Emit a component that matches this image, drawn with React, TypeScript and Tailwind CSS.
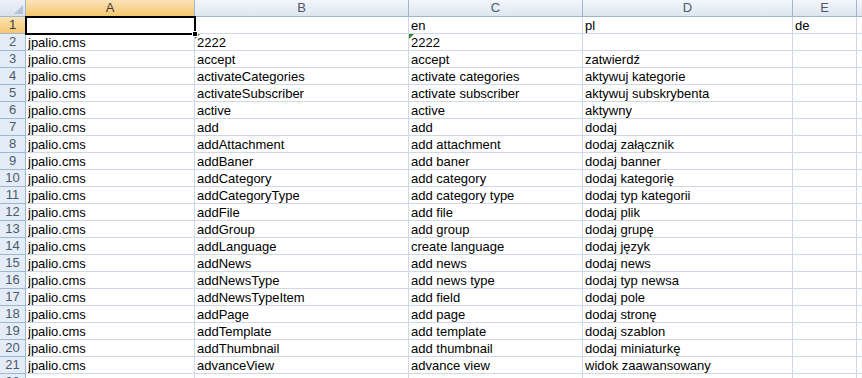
import React from 'react';

const COLS = [
  { key: 'A', w: 169 },
  { key: 'B', w: 214 },
  { key: 'C', w: 174 },
  { key: 'D', w: 210 },
  { key: 'E', w: 64 },
  { key: 'F', w: 60 },
];

const rows: string[][] = [
  ['', '', 'en', 'pl', 'de'],
  ['jpalio.cms', '2222', '2222', '', ''],
  ['jpalio.cms', 'accept', 'accept', 'zatwierdź', ''],
  ['jpalio.cms', 'activateCategories', 'activate categories', 'aktywuj kategorie', ''],
  ['jpalio.cms', 'activateSubscriber', 'activate subscriber', 'aktywuj subskrybenta', ''],
  ['jpalio.cms', 'active', 'active', 'aktywny', ''],
  ['jpalio.cms', 'add', 'add', 'dodaj', ''],
  ['jpalio.cms', 'addAttachment', 'add attachment', 'dodaj załącznik', ''],
  ['jpalio.cms', 'addBaner', 'add baner', 'dodaj banner', ''],
  ['jpalio.cms', 'addCategory', 'add category', 'dodaj kategorię', ''],
  ['jpalio.cms', 'addCategoryType', 'add category type', 'dodaj typ kategorii', ''],
  ['jpalio.cms', 'addFile', 'add file', 'dodaj plik', ''],
  ['jpalio.cms', 'addGroup', 'add group', 'dodaj grupę', ''],
  ['jpalio.cms', 'addLanguage', 'create language', 'dodaj język', ''],
  ['jpalio.cms', 'addNews', 'add news', 'dodaj news', ''],
  ['jpalio.cms', 'addNewsType', 'add news type', 'dodaj typ newsa', ''],
  ['jpalio.cms', 'addNewsTypeItem', 'add field', 'dodaj pole', ''],
  ['jpalio.cms', 'addPage', 'add page', 'dodaj stronę', ''],
  ['jpalio.cms', 'addTemplate', 'add template', 'dodaj szablon', ''],
  ['jpalio.cms', 'addThumbnail', 'add thumbnail', 'dodaj miniaturkę', ''],
  ['jpalio.cms', 'advanceView', 'advance view', 'widok zaawansowany', ''],
  ['jpalio.cms', 'availableLanguages', 'available languages', 'dostępne języki', ''],
];

const App: React.FC = () => {
  return (
    <div className="w-[862px] h-[378px] overflow-hidden bg-white font-['Liberation_Sans',Arial,sans-serif] text-[13px] text-black">
      {/* column headers */}
      <div className="flex h-[17px]">
        <div className="relative w-[26px] shrink-0 border-r border-b border-[#9eb6ce] bg-linear-to-b from-[#eef2f8] to-[#d8e2ee]">
          <div className="absolute right-[2px] bottom-[2px] w-0 h-0 [border-bottom:9px_solid_#b4c4d8] [border-left:9px_solid_transparent]" />
        </div>
        {COLS.map(c => (
          <div
            key={c.key}
            style={{ width: c.w }}
            className={
              c.key === 'A'
                ? 'shrink-0 border-r border-b border-r-[#9eb6ce] border-b-[#f29536] bg-linear-to-b from-[#fbe4b8] to-[#f3c66a] text-center leading-[16px] text-[#3a3a3a]'
                : 'shrink-0 border-r border-b border-[#9eb6ce] bg-linear-to-b from-[#f3f6fb] to-[#dde6f0] text-center leading-[16px] text-[#4c5a6a]'
            }
          >
            {c.key}
          </div>
        ))}
      </div>

      {rows.map((r, i) => (
        <div key={i} className="flex h-[17px]">
          <div
            className={
              i === 0
                ? 'w-[26px] shrink-0 border-r border-b border-b-[#9eb6ce] border-r-[#f29536] bg-linear-to-b from-[#fbe4b8] to-[#f3c66a] text-center leading-[16px] text-[#3a3a3a]'
                : 'w-[26px] shrink-0 border-r border-b border-[#9eb6ce] bg-[#e4ecf7] text-center leading-[16px] text-[#4c5a6a]'
            }
          >
            {i + 1}
          </div>
          {COLS.map((c, j) => (
            <div
              key={c.key}
              style={{ width: c.w }}
              className="relative shrink-0 border-r border-b border-[#d0d7e5] pl-[2px] leading-[17px] whitespace-nowrap"
            >
              <div className="overflow-hidden">{r[j] ?? ''}</div>
              {i === 1 && (j === 1 || j === 2) && (
                <span className="absolute left-0 top-0 w-0 h-0 [border-top:5px_solid_#2f8a2f] [border-right:5px_solid_transparent]" />
              )}
              {i === 0 && j === 0 && (
                <div className="absolute left-[-1px] top-[-1px] w-[171px] h-[19px] border-2 border-black z-10 pointer-events-none">
                  <span className="absolute right-[-4px] bottom-[-4px] w-[6px] h-[6px] bg-black border border-white" />
                </div>
              )}
            </div>
          ))}
        </div>
      ))}
    </div>
  );
};

export default App;
